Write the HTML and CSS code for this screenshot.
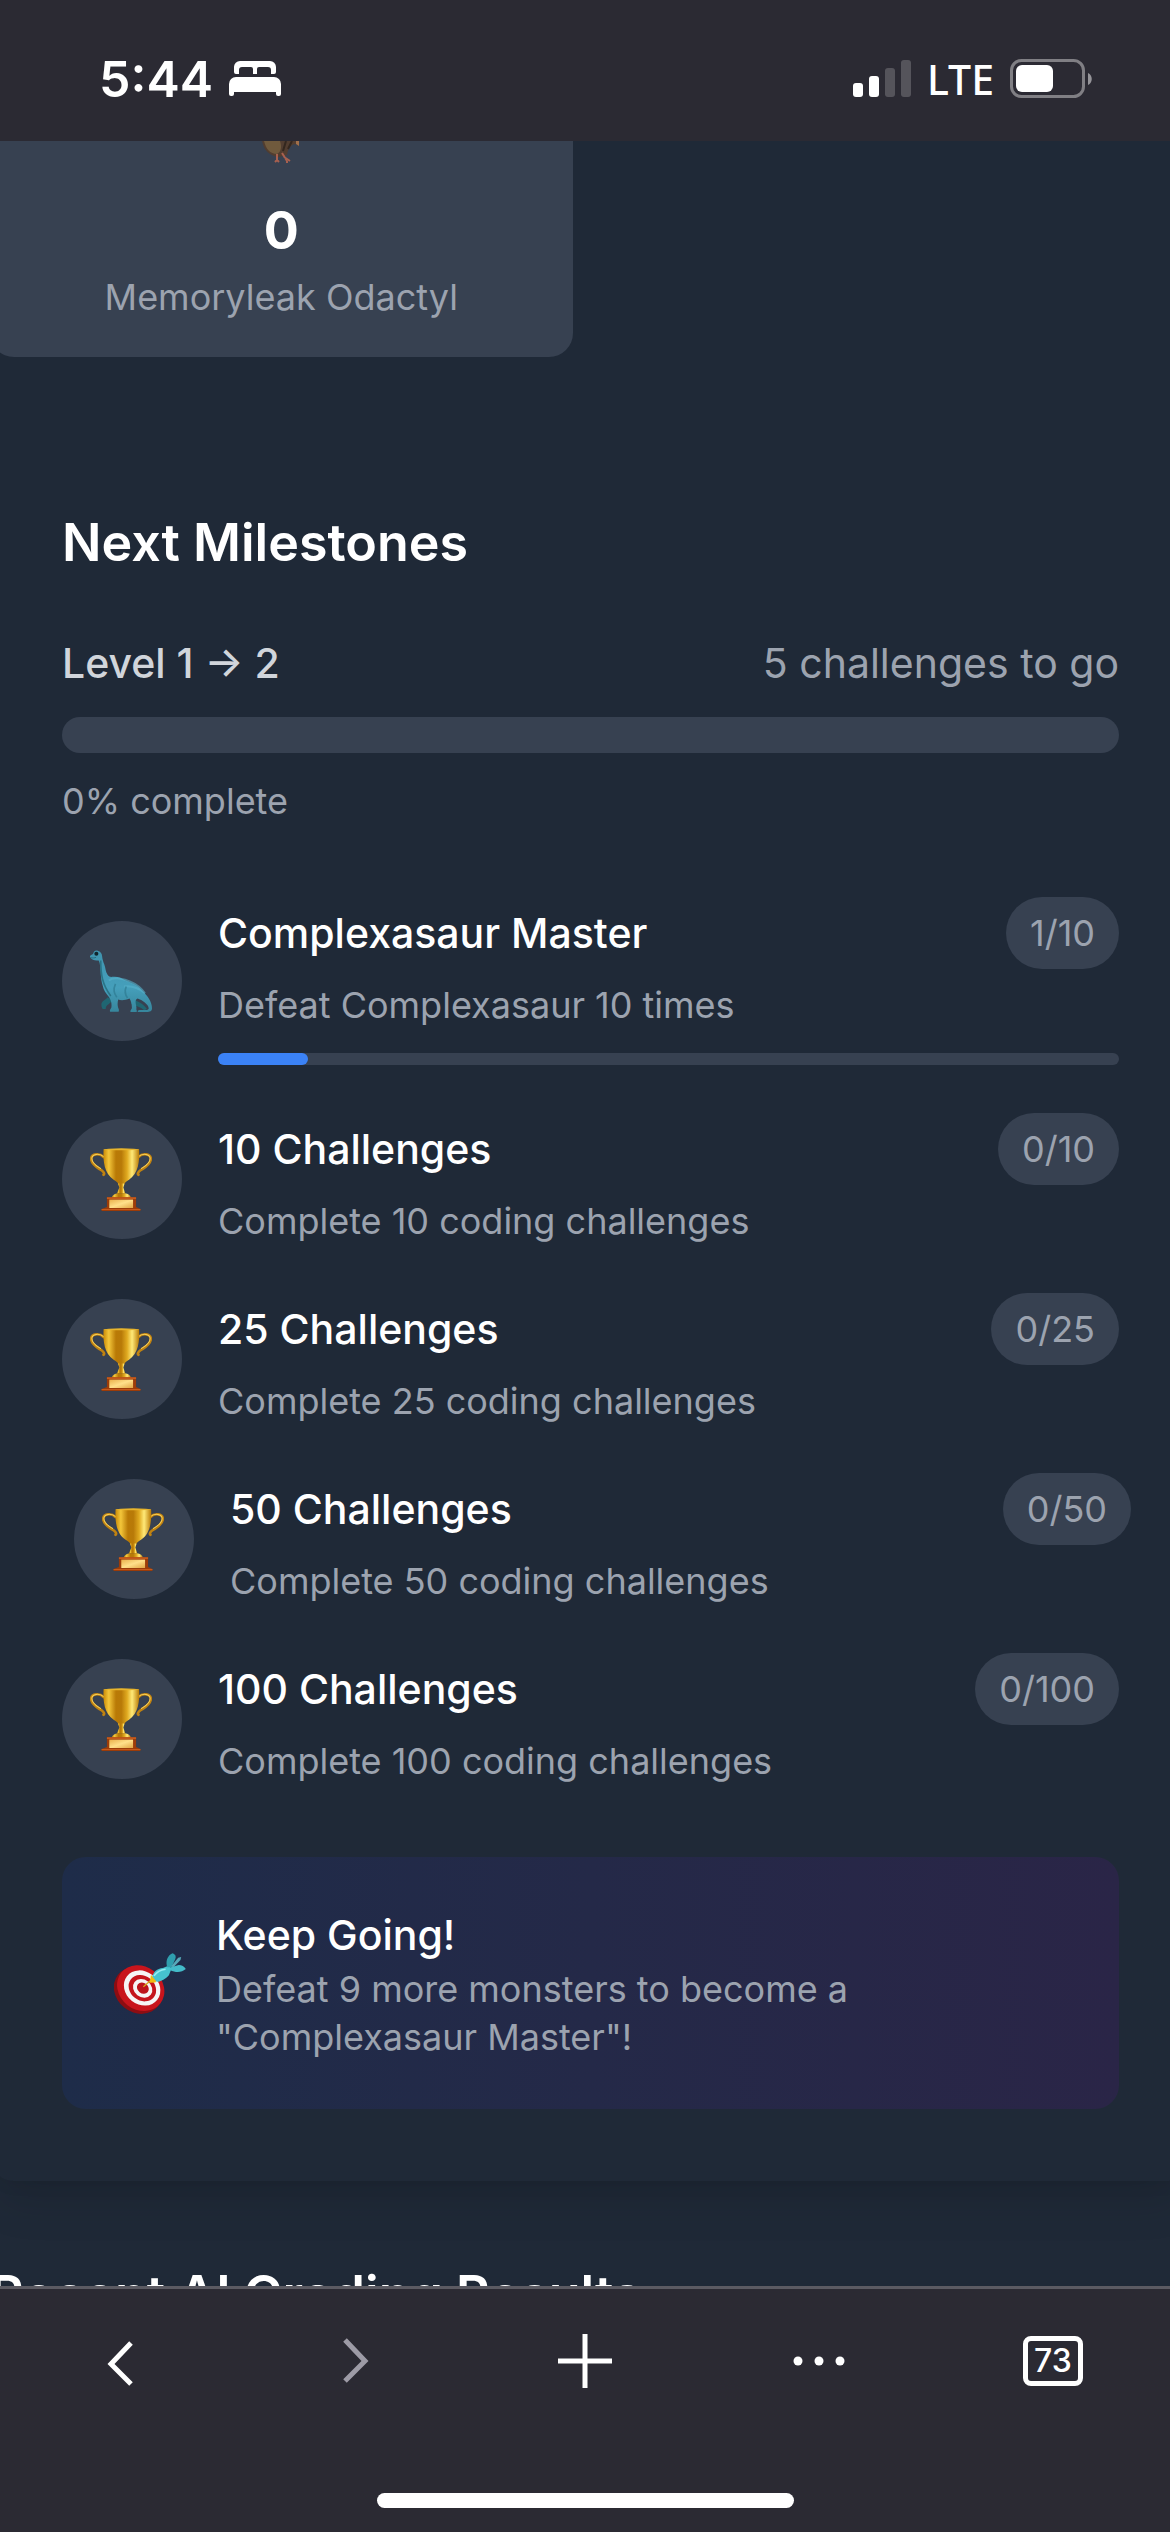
FILE: index.html
```html
<!DOCTYPE html>
<html lang="en">
<head>
    <meta charset="UTF-8">
    <meta name="viewport" content="width=device-width, initial-scale=1.0">
    <title>Next Milestones</title>
    <link rel="stylesheet" href="styles.css">
</head>
<body>
    <svg class="defs" width="0" height="0" aria-hidden="true">
        <defs>
            <linearGradient id="gold" x1="0" x2="1" y1="0" y2="0">
                <stop offset="0" stop-color="#c98a08"/>
                <stop offset="0.15" stop-color="#f3c63a"/>
                <stop offset="0.35" stop-color="#b97a06"/>
                <stop offset="0.5" stop-color="#b87a08"/>
                <stop offset="0.66" stop-color="#e0aa20"/>
                <stop offset="0.8" stop-color="#ffe978"/>
                <stop offset="1" stop-color="#b87905"/>
            </linearGradient>
            <linearGradient id="plate" x1="0" x2="1" y1="0" y2="1">
                <stop offset="0" stop-color="#e9b04a"/>
                <stop offset="0.5" stop-color="#ffe08a"/>
                <stop offset="1" stop-color="#e0a544"/>
            </linearGradient>
            <linearGradient id="dino" x1="0" x2="0" y1="0" y2="1">
                <stop offset="0" stop-color="#3f93ad"/>
                <stop offset="0.6" stop-color="#459fbb"/>
                <stop offset="1" stop-color="#37869c"/>
            </linearGradient>
            <symbol id="trophy" viewBox="0 0 184 188">
                <g fill="none" stroke-linecap="round" stroke-linejoin="round">
                    <path d="M40 27C27 14 4 17 3 32c0 16 16 25 27 32 10 6 14 12 10 16M144 27c13-13 36-10 37 5 0 16-16 25-27 32-10 6-14 12-10 16" stroke="#c08210" stroke-width="8"/>
                    <path d="M40 26C27 14 5 18 5 31c0 15 15 23 26 30M144 26c13-12 35-8 35 5 0 15-15 23-26 30" stroke="#f6d05a" stroke-width="3"/>
                </g>
                <path d="M40 4h106c2 36-2 72-30 91-9 6-14 9-14 14h-18c0-5-5-8-14-14C42 76 38 40 40 4Z" fill="url(#gold)"/>
                <ellipse cx="93" cy="4" rx="53" ry="3" fill="#e8b52c"/>
                <path d="M83 106h20l-4 12 6 18H80l7-18Z" fill="url(#gold)"/>
                <path d="M64 150c1-9 10-14 18-15h22c9 1 17 6 18 15Z" fill="url(#gold)"/>
                <path d="M50 147h87v29l13 6v6H34v-6l16-6Z" fill="#9c3c09"/>
                <path d="M50 147h87v5H50zM34 182h116v3H34z" fill="#c45a1c"/>
                <path d="M57 154h71v25H57z" fill="url(#plate)"/>
            </symbol>
        </defs>
    </svg>

    <header class="status-bar">
        <div class="status-left">
            <span class="time">5:44</span>
            <svg width="52" height="35" viewBox="0 0 52 35" fill="#fff" aria-label="Sleep focus">
                <path d="M5 11V6a6 6 0 0 1 6-6h30a6 6 0 0 1 6 6v5a2 2 0 0 1-2 2h-3V9a3 3 0 0 0-3-3H30a2 2 0 0 0-2 2v5h-4V8a2 2 0 0 0-2-2h-9a3 3 0 0 0-3 3v4H7a2 2 0 0 1-2-2Z"/>
                <path d="M0 23a7 7 0 0 1 7-7h38a7 7 0 0 1 7 7v10a2 2 0 0 1-2 2h-1a2 2 0 0 1-2-2v-2H5v2a2 2 0 0 1-2 2H2a2 2 0 0 1-2-2Z"/>
            </svg>
        </div>
        <div class="status-right">
            <svg width="58" height="37" viewBox="0 0 58 37" fill="#fff" aria-label="Signal">
                <rect x="0" y="23" width="10" height="14" rx="3"/>
                <rect x="16" y="16" width="10" height="21" rx="3"/>
                <rect x="32" y="8" width="10" height="29" rx="3" opacity=".2"/>
                <rect x="48" y="0" width="10" height="37" rx="3" opacity=".2"/>
            </svg>
            <span class="network">LTE</span>
            <svg width="82" height="39" viewBox="0 0 82 39" aria-label="Battery">
                <rect x="1.5" y="1.5" width="72" height="36" rx="10" fill="none" stroke="#807f84" stroke-width="3"/>
                <rect x="6" y="6" width="37" height="27" rx="6" fill="#fff"/>
                <path d="M78 14c5 2 5 10 0 12Z" fill="#959499"/>
            </svg>
        </div>
    </header>

    <main class="page">
        <div class="stats-grid">
            <div class="stat-card">
                <svg width="38" height="22" viewBox="0 0 38 22" aria-hidden="true">
                    <path d="M0 0h37v5l-3-2c-5 0-8 4-9 11l-8 2C7 15 2 9 0 0Z" fill="#513d30"/>
                    <path d="M2 0h16c2 6 1 11-3 13C8 13 4 8 2 0Z" fill="#705a3d"/>
                    <path d="M24 0l-3 10M30 0l-4 8" stroke="#33271f" stroke-width="2"/>
                    <path d="M34 0h3v5l-3-2Z" fill="#a06f4a"/>
                    <path d="M15 13v6l-2 2m2-2 2 2M20 12l5 8m-3-4 6 4m-3 0v2" fill="none" stroke="#a8604f" stroke-width="2"/>
                </svg>
                <div class="stat-value">0</div>
                <div class="stat-name">Memoryleak Odactyl</div>
            </div>
        </div>

        <section class="milestones">
            <h2>Next Milestones</h2>

            <div class="level-row">
                <span class="level-name">Level 1 → 2</span>
                <span class="level-left">5 challenges to go</span>
            </div>
            <div class="level-bar" role="progressbar" aria-label="Level progress" aria-valuenow="0" aria-valuemin="0" aria-valuemax="100"></div>
            <p class="level-percent">0% complete</p>

            <ul class="milestone-list">
                <li class="milestone">
                    <div class="milestone-icon">
                        <svg width="62" height="62" viewBox="30 60 185 183" aria-hidden="true">
                            <path d="M82 200c-4 8-18 10-18 22 0 6 2 10 4 13h9c-1-14 14-14 20-27ZM158 205c12 6 32 14 42 30l-8 4c-12-10-26-12-40-20Z" fill="#1f6672"/>
                            <path d="M30 80c-1-6 5-6 9-9 2-9 8-12 14-10 8 2 13 8 13 16 1 10 3 16 7 26 4 12 3 20 9 29 5 7 9 8 16 7 14-2 26 4 37 10 20 8 36 14 50 30 16 16 30 34 30 54 0 9-6 11-16 11h-26c-3-4 3-6 9-6 10 0 21 1 23-4 2-10-19-26-33-30-4 2-6 5-6 10 0 8 4 14 2 22 2 4 3 7 0 8h-17c-2-6 4-8 4-13 0-12-3-20-7-27-14 6-26 6-34 3-2 10-3 18 2 29 0 4 1 6-1 7H90c-3-6 4-9 4-14 1-11-1-20-7-29-10-12-16-20-19-34-4-14-6-26-6-43-1-12-2-25-6-33-8 1-20 1-26-10Z" fill="url(#dino)"/>
                            <path d="M62 90c0 40 4 72 30 106" stroke="#2a7487" stroke-width="5" fill="none"/>
                            <path d="M86 150c14-12 46-6 66 4 20 8 32 20 42 34-22-18-46-22-62-20" stroke="#59b3cb" stroke-width="6" fill="none" opacity=".6"/>
                            <path d="M106 160c-8 18-4 28 4 40M138 168c-6 16-4 24 4 34" stroke="#2d7a92" stroke-width="5" fill="none" opacity=".7"/>
                            <path d="M32 82c6 1 11 1 16-1" stroke="#1d5969" stroke-width="2" fill="none"/>
                            <circle cx="49" cy="70" r="6" fill="#10252c"/>
                        </svg>
                    </div>
                    <div class="milestone-body">
                        <div class="milestone-head">
                            <h3>Complexasaur Master</h3>
                            <span class="badge">1/10</span>
                        </div>
                        <p>Defeat Complexasaur 10 times</p>
                        <div class="mini-bar" role="progressbar" aria-label="Complexasaur Master" aria-valuenow="1" aria-valuemin="0" aria-valuemax="10">
                            <div class="mini-fill" style="width: 10%"></div>
                        </div>
                    </div>
                </li>
                <li class="milestone">
                    <div class="milestone-icon"><svg width="62" height="63" aria-hidden="true"><use href="#trophy"/></svg></div>
                    <div class="milestone-body">
                        <div class="milestone-head">
                            <h3>10 Challenges</h3>
                            <span class="badge">0/10</span>
                        </div>
                        <p>Complete 10 coding challenges</p>
                    </div>
                </li>
                <li class="milestone">
                    <div class="milestone-icon"><svg width="62" height="63" aria-hidden="true"><use href="#trophy"/></svg></div>
                    <div class="milestone-body">
                        <div class="milestone-head">
                            <h3>25 Challenges</h3>
                            <span class="badge">0/25</span>
                        </div>
                        <p>Complete 25 coding challenges</p>
                    </div>
                </li>
                <li class="milestone active">
                    <div class="milestone-icon"><svg width="62" height="63" aria-hidden="true"><use href="#trophy"/></svg></div>
                    <div class="milestone-body">
                        <div class="milestone-head">
                            <h3>50 Challenges</h3>
                            <span class="badge">0/50</span>
                        </div>
                        <p>Complete 50 coding challenges</p>
                    </div>
                </li>
                <li class="milestone">
                    <div class="milestone-icon"><svg width="62" height="63" aria-hidden="true"><use href="#trophy"/></svg></div>
                    <div class="milestone-body">
                        <div class="milestone-head">
                            <h3>100 Challenges</h3>
                            <span class="badge">0/100</span>
                        </div>
                        <p>Complete 100 coding challenges</p>
                    </div>
                </li>
            </ul>

            <div class="keep-going">
                <svg width="72" height="61" viewBox="72 48 216 184" aria-hidden="true">
                    <g transform="rotate(38 150 155)">
                        <ellipse cx="149" cy="163" rx="77" ry="67" fill="#8d0d12"/>
                        <ellipse cx="151" cy="153" rx="75" ry="65" fill="#c8141c"/>
                        <ellipse cx="154" cy="150" rx="58" ry="50" fill="#f6f4f5"/>
                        <ellipse cx="155" cy="150" rx="44" ry="37" fill="#c5141c"/>
                        <ellipse cx="156" cy="150" rx="31" ry="26" fill="#f6f4f5"/>
                        <ellipse cx="156" cy="149" rx="19" ry="16" fill="#bd141b"/>
                    </g>
                    <path d="M160 150l28-24" stroke="#d8a91c" stroke-width="4"/>
                    <path d="M183 114l17 17-4 6-17 1Z" fill="#f0bd12"/>
                    <path d="M187 119c3-14 14-24 32-26l18-7 8 9-8 20c-9 11-23 19-37 20Z" fill="#46c3cf"/>
                    <path d="M192 117c9-13 20-18 35-20" stroke="#95edf2" stroke-width="5" fill="none"/>
                    <path d="M232 91c-6-17 0-35 16-42 10 4 11 11 8 18l-11 24Z" fill="#2f9fae"/>
                    <path d="M244 88l21-26 9-2-2 9-22 23Z" fill="#56a9b9"/>
                    <path d="M243 91l24-7c9 0 16 4 21 12-13 11-29 12-48 3Z" fill="#43bbc9"/>
                </svg>
                <div class="keep-text">
                    <h3>Keep Going!</h3>
                    <p>Defeat 9 more monsters to become a "Complexasaur Master"!</p>
                </div>
            </div>
        </section>

        <section class="results">
            <h2>Recent AI Grading Results</h2>
        </section>
    </main>

    <footer class="browser-bar">
        <nav class="toolbar">
            <button type="button" aria-label="Back">
                <svg width="60" height="60" viewBox="0 0 60 60"><path d="M44 12 24 33l20 20" stroke="#fff"/></svg>
            </button>
            <button type="button" aria-label="Forward" disabled>
                <svg width="60" height="60" viewBox="0 0 60 60"><path d="m24 9 20 21-20 20" stroke="#9d9ba6"/></svg>
            </button>
            <button type="button" aria-label="New tab">
                <svg width="60" height="60" viewBox="0 0 60 60"><path d="M30 3v54M3 30h54" stroke="#fff"/></svg>
            </button>
            <button type="button" aria-label="Menu">
                <svg width="60" height="60" viewBox="0 0 60 60"><g fill="#fff"><circle cx="9" cy="30" r="4.500"/><circle cx="30" cy="30" r="4.500"/><circle cx="51" cy="30" r="4.500"/></g></svg>
            </button>
            <button type="button" aria-label="73 open tabs"><span class="tab-count">73</span></button>
        </nav>
        <div class="home-indicator"></div>
    </footer>
</body>
</html>
```

FILE: styles.css
```css
* {
    margin: 0;
    padding: 0;
    box-sizing: border-box;
}
body {
    font-family: Inter, "Liberation Sans", sans-serif;
    background-color: #1f2937;
    color: #fff;
    height: 100vh;
    display: flex;
    flex-direction: column;
    overflow: hidden;
}
svg {
    display: block;
    flex-shrink: 0;
}
.defs {
    position: absolute;
}

/* status bar */
.status-bar {
    background-color: #2b2a33;
    height: 141px;
    padding: 16px 78px 0 99px;
    display: flex;
    flex-shrink: 0;
    align-items: center;
    justify-content: space-between;
}
.status-left, .status-right {
    display: flex;
    align-items: center;
    gap: 16px;
}
.time {
    font-size: 50px;
    font-weight: 600;
}
.network {
    font-family: "Noto Sans", "Open Sans", sans-serif;
    font-size: 41px;
    font-weight: 500;
    line-height: 48px;
}

/* page content */
.page {
    flex: 1;
    min-height: 0;
    overflow: hidden;
    margin: 0 -21px 0 -10px;
}
.stats-grid {
    display: grid;
    grid-template-columns: 1fr 1fr;
    gap: 36px;
    margin-bottom: 72px;
}
.stat-card {
    background-color: #374151;
    border-radius: 0 0 24px 24px;
    padding-bottom: 36px;
    display: flex;
    flex-direction: column;
    align-items: center;
}
.stat-value {
    font-size: 52px;
    font-weight: 700;
    line-height: 72px;
    margin: 32px 0 6px;
}
.stat-name {
    font-size: 36px;
    line-height: 48px;
    color: #9ca3af;
}
h2 {
    font-size: 52px;
    font-weight: 600;
    line-height: 84px;
}
h3 {
    font-size: 41px;
    font-weight: 500;
    line-height: 60px;
}
p {
    font-size: 36px;
    line-height: 48px;
    color: #9ca3af;
}
.milestones {
    padding: 72px;
    border-radius: 24px;
    box-shadow: 0 30px 45px -9px rgba(0, 0, 0, 0.1), 0 12px 18px -12px rgba(0, 0, 0, 0.1);
}
.level-row {
    display: flex;
    justify-content: space-between;
    font-size: 41px;
    line-height: 60px;
    margin: 48px 0 24px;
}
.level-name {
    color: #d1d5db;
    font-weight: 500;
}
.level-left {
    color: #9ca3af;
}
.level-bar {
    height: 36px;
    border-radius: 18px;
    background-color: #374151;
    margin-bottom: 24px;
}
.milestone-list {
    list-style: none;
    display: flex;
    flex-direction: column;
    gap: 48px;
    margin: 72px 0;
}
.milestone {
    display: flex;
    align-items: center;
    gap: 36px;
}
.milestone.active {
    margin: 0 -12px 0 12px;
}
.milestone-icon {
    width: 120px;
    height: 120px;
    padding-right: 3px;
    border-radius: 50%;
    background-color: #374151;
    display: flex;
    flex-shrink: 0;
    align-items: center;
    justify-content: center;
}
.milestone-body {
    flex: 1;
}
.milestone-head {
    display: flex;
    align-items: center;
    justify-content: space-between;
    margin-bottom: 12px;
}
.badge {
    font-size: 36px;
    line-height: 48px;
    padding: 12px 24px;
    border-radius: 36px;
    background-color: #374151;
    color: #9ca3af;
}
.mini-bar {
    height: 12px;
    border-radius: 6px;
    background-color: #374151;
    margin-top: 24px;
}
.mini-fill {
    height: 100%;
    border-radius: 6px;
    background-color: #3b82f6;
}
.keep-going {
    display: flex;
    align-items: center;
    gap: 30px;
    padding: 48px 52px;
    border-radius: 24px;
    background: linear-gradient(to right, #1e2c49, #242948 50%, #2a2547);
}
.keep-text {
    max-width: 700px;
}
.results {
    padding-top: 72px;
}

/* browser toolbar */
.browser-bar {
    background-color: #2b2a33;
    border-top: 3px solid #5b5a62;
    flex-shrink: 0;
    padding: 42px 0 24px;
}
.toolbar {
    display: grid;
    grid-template-columns: repeat(5, 1fr);
    justify-items: center;
    margin-bottom: 102px;
}
.toolbar button {
    background: none;
    border: none;
    color: #fff;
    font-family: inherit;
    display: flex;
    align-items: center;
}
.toolbar path {
    fill: none;
    stroke-width: 5;
}
.tab-count {
    width: 60px;
    height: 50px;
    border: 5px solid #fff;
    border-radius: 8px;
    font-size: 32px;
    font-weight: 500;
    line-height: 40px;
    text-align: center;
}
.home-indicator {
    width: 417px;
    height: 15px;
    border-radius: 8px;
    background-color: #fff;
    margin: 0 auto;
}
```
